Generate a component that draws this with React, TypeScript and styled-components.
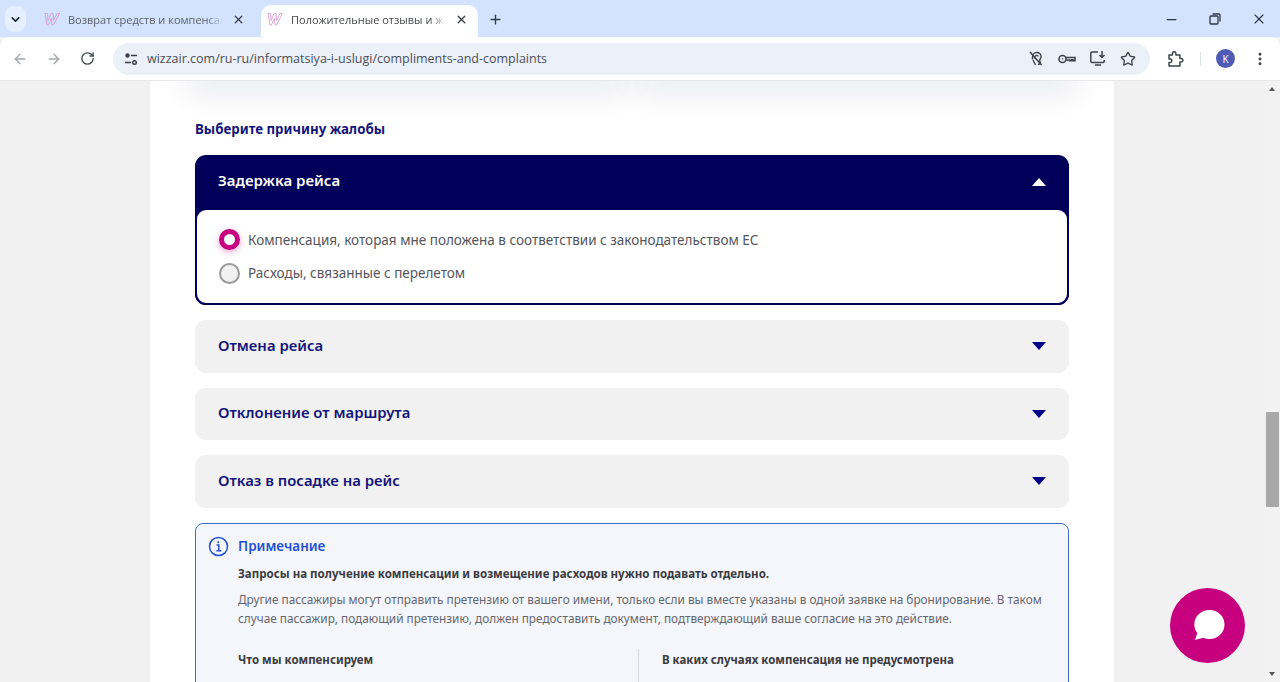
import React from "react";
import styled, { createGlobalStyle } from "styled-components";
import { ArrowLeft, ArrowRight, RotateCw, X, Plus, ChevronDown, Star, Minus, MoreVertical } from "lucide-react";

const Global = createGlobalStyle`
	html, body { margin: 0; padding: 0; height: 682px; overflow: hidden; background: #f1f1f1; }
	* { box-sizing: border-box; }
	body { font-family: "Noto Sans", "Liberation Sans", sans-serif; }
`;

const Window = styled.div`
	display: flex;
	flex-direction: column;
	width: 1280px;
	height: 682px;
	overflow: hidden;
`;

const TabStrip = styled.div`
	display: flex;
	align-items: flex-end;
	height: 37px;
	flex: none;
	background: #d3e3fd;
	padding-left: 5px;
`;

const TabSearch = styled.div`
	width: 21px;
	height: 26px;
	margin-bottom: 5px;
	border-radius: 9px;
	background: #e6effd;
	display: flex;
	align-items: center;
	justify-content: center;
	color: #1f2a3a;
`;

const Tab = styled.div<{ $active?: boolean }>`
	display: flex;
	align-items: center;
	width: ${(p) => (p.$active ? "217px" : "235px")};
	height: 32px;
	padding-left: ${(p) => (p.$active ? "6px" : "18px")};
	padding-bottom: 4px;
	background: ${(p) => (p.$active ? "#fff" : "transparent")};
	border-radius: 10px 10px 0 0;
	color: ${(p) => (p.$active ? "#45474a" : "#5a5f68")};
	font-family: "Open Sans", "Noto Sans", sans-serif;
	font-size: 11px;
`;

const TabLabel = styled.span`
	width: 155px;
	margin-left: 8px;
	overflow: hidden;
	white-space: nowrap;
	-webkit-mask-image: linear-gradient(90deg, #000 90%, transparent);
	mask-image: linear-gradient(90deg, #000 90%, transparent);
`;

const TabClose = styled.span`
	display: flex;
	margin-left: 9px;
	color: #3b3f46;
`;

const NewTab = styled.span`
	display: flex;
	margin: 0 0 10px 10px;
	color: #333a46;
`;

const WindowControls = styled.div`
	display: flex;
	align-items: center;
	gap: 28px;
	margin: 0 13px 10px auto;
	color: #2c3442;
`;

const RestoreIcon = () => (
	<svg width="16" height="16" viewBox="0 0 16 16" fill="none" stroke="currentColor" strokeWidth="1.3">
		<rect x="3" y="5" width="8" height="8" rx="1" />
		<path d="M5.5 3h6.500a1 1 0 0 1 1 1v6.500" />
	</svg>
);

const Toolbar = styled.div`
	display: flex;
	align-items: center;
	height: 44px;
	flex: none;
	background: #fff;
	border-radius: 10px 10px 0 0;
	border-bottom: 1px solid #e6e8ec;
	padding-left: 12px;
	color: #474c52;
`;

const NavButtons = styled.div`
	display: flex;
	align-items: center;
	gap: 18px;
`;

const Omnibox = styled.div`
	display: flex;
	align-items: center;
	width: 1037px;
	height: 32px;
	margin-left: 18px;
	padding: 0 14px 0 9px;
	border-radius: 16px;
	background: #ecf0f9;
`;

const SiteInfo = styled.span`
	display: flex;
	width: 18px;
	height: 18px;
	align-items: center;
	justify-content: center;
	color: #3a3f47;
`;

const Url = styled.span`
	margin-left: 7px;
	font-family: "Open Sans", "Noto Sans", sans-serif;
	font-size: 12.5px;
	color: #4a4f57;
`;

const OmniIcons = styled.div`
	display: flex;
	align-items: center;
	gap: 13px;
	margin-left: auto;
	color: #3e434a;
`;

const ToolRight = styled.div`
	display: flex;
	align-items: center;
	margin-left: 16px;
	color: #3e434a;
`;

const Separator = styled.span`
	width: 1px;
	height: 14px;
	margin: 0 15px 0 16px;
	background: #dfe3ea;
`;

const Avatar = styled.span`
	width: 19px;
	height: 19px;
	margin-right: 17px;
	border-radius: 50%;
	background: #4f5bb5;
	color: #fff;
	font-family: "Open Sans", sans-serif;
	font-size: 10px;
	display: flex;
	align-items: center;
	justify-content: center;
`;

const Viewport = styled.div`
	display: flex;
	flex: 1;
	min-height: 0;
`;

const PageArea = styled.div`
	flex: 1;
	display: flex;
	justify-content: flex-start;
	padding-left: 150px;
	background: #f1f1f1;
	overflow: hidden;
`;

const Sheet = styled.main`
	width: 964px;
	padding: 0 45px;
	background: #fff;
	overflow: hidden;
`;

const CardStubs = styled.div`
	display: flex;
	gap: 24px;
	height: 1px;
	margin-top: -1px;
`;

const CardStub = styled.div`
	flex: 1;
	height: 1px;
	box-shadow: 0 4px 26px 8px rgba(50, 55, 95, 0.13);
`;

const SectionTitle = styled.h2`
	margin: 39px 0 16px;
	font-size: 13.3px;
	line-height: 19px;
	font-weight: 700;
	color: #14147a;
`;

const Accordion = styled.div`
	display: flex;
	flex-direction: column;
	gap: 15px;
`;

const OpenItem = styled.section`
	border-radius: 11px;
	background: #00005a;
`;

const OpenHeader = styled.div`
	display: flex;
	align-items: center;
	justify-content: space-between;
	height: 53px;
	padding: 0 23px 3px;
	font-size: 15px;
	font-weight: 600;
	color: #fff;
`;

const OpenBody = styled.div`
	display: flex;
	flex-direction: column;
	gap: 11.5px;
	height: 97px;
	padding: 18.5px 22px 0;
	background: #fff;
	border: 2px solid #00005a;
	border-radius: 11px;
`;

const Option = styled.label`
	display: flex;
	align-items: center;
	gap: 8px;
	font-size: 13.5px;
	line-height: 22px;
	color: #55565c;
`;

const Radio = styled.span<{ $checked?: boolean }>`
	width: 21px;
	height: 21px;
	flex: none;
	border-radius: 50%;
	background: ${(p) => (p.$checked ? "#fff" : "#f1f1f1")};
	border: ${(p) => (p.$checked ? "5px solid #c6007e" : "2px solid #9a9a9c")};
	box-shadow: ${(p) => (p.$checked ? "0 2px 6px rgba(198, 0, 126, 0.35)" : "none")};
`;

const ClosedItem = styled.div`
	display: flex;
	align-items: center;
	justify-content: space-between;
	height: 52.5px;
	padding: 0 23px 3px;
	border-radius: 11px;
	background: #f1f1f1;
	font-size: 14.9px;
	font-weight: 600;
	color: #14147a;
`;

const Caret = styled.span<{ $up?: boolean; $color: string }>`
	width: 0;
	height: 0;
	margin-top: 3px;
	border-left: 7.5px solid transparent;
	border-right: 7.5px solid transparent;
	${(p) => (p.$up ? "border-bottom" : "border-top")}: 8px solid ${(p) => p.$color};
`;

const Note = styled.aside`
	margin-top: 15px;
	height: 260px;
	padding: 12px 20px 0 42px;
	border: 1px solid #3d6fc9;
	border-radius: 8px;
	background: #f4f6fc;
`;

const NoteHead = styled.div`
	display: flex;
	align-items: center;
	gap: 9px;
	margin-left: -30px;
	font-size: 13.5px;
	line-height: 19px;
	font-weight: 600;
	color: #2350d2;
`;

const NoteLead = styled.p`
	margin: 9px 0 0;
	font-size: 11.55px;
	line-height: 16px;
	font-weight: 700;
	color: #3b3b40;
`;

const NoteText = styled.p`
	margin: 8px 0 0;
	font-size: 11.8px;
	line-height: 19px;
	color: #66676c;
`;

const NoteColumns = styled.div`
	display: grid;
	grid-template-columns: 400px 1fr;
	margin-top: 21px;
`;

const NoteColumn = styled.div<{ $divided?: boolean }>`
	height: 60px;
	font-size: 11.5px;
	line-height: 16px;
	font-weight: 700;
	color: #3b3b40;
	padding-top: 3px;
	${(p) => p.$divided && "border-left: 1px solid #d9dbe2; padding-left: 23px;"}
`;

const ScrollTrack = styled.div`
	position: relative;
	width: 15px;
	flex: none;
	background: #f2f2f2;
`;

const ScrollThumb = styled.div`
	position: absolute;
	top: 331px;
	left: 1px;
	width: 13px;
	height: 95px;
	background: #a8a8a8;
`;

const ScrollArrow = styled.span<{ $up?: boolean }>`
	position: absolute;
	left: 4px;
	${(p) => (p.$up ? "top: 6px" : "bottom: 6px")};
	border-left: 3.5px solid transparent;
	border-right: 3.5px solid transparent;
	${(p) => (p.$up ? "border-bottom" : "border-top")}: 4px solid #555;
`;

const ChatButton = styled.button`
	position: fixed;
	left: 1170px;
	top: 588px;
	width: 75px;
	height: 75px;
	padding: 0 0 2px;
	border: 0;
	border-radius: 50%;
	background: #c6007e;
	display: flex;
	align-items: center;
	justify-content: center;
`;

const WizzLogo = ({ faded }: { faded?: boolean }) => (
	<svg width="16" height="14" viewBox="0 0 16 14" fill="none" stroke={faded ? "#e0a6dc" : "#d9a0d8"} strokeWidth="1">
		<path d="M1 1.500h2.500l.5 7 3-7h2l.5 7 3.500-7H15.500l-6 11.500H8l-.5-7-3 7H3z" />
	</svg>
);

const SiteInfoIcon = () => (
	<svg width="14" height="14" viewBox="0 0 14 14" fill="none" stroke="currentColor" strokeWidth="1.4">
		<circle cx="3.500" cy="3.500" r="1.500" fill="currentColor" />
		<path d="M7 3.500h6M1 10.500h6" />
		<circle cx="10.500" cy="10.500" r="1.800" />
	</svg>
);

const PinOffIcon = () => (
	<svg width="17" height="17" viewBox="0 0 17 17" fill="none" stroke="currentColor" strokeWidth="1.4">
		<path d="M4.500 9.500V7a4.300 4.300 0 0 1 8.600-.5c.2 1.600-1 2.200-1.400 3.300-.3 1 .4 2.300.8 3.200-.5 1-1.500 1.500-2.500 1" />
		<path d="M7 8.500a2 2 0 0 1 3.500-2" />
		<path d="M2 2l11.500 13" strokeWidth="1.600" />
		<path d="M5 10l2.500 5" />
	</svg>
);

const KeyIcon = () => (
	<svg width="18" height="12" viewBox="0 0 18 12" fill="none" stroke="currentColor" strokeWidth="1.6">
		<circle cx="4.500" cy="6" r="3.500" />
		<circle cx="4.500" cy="6" r=".8" fill="currentColor" stroke="none" />
		<path d="M8 4.500h9v3.300h-2v-1h-1.500v1h-2V7H8" />
	</svg>
);

const InstallIcon = () => (
	<svg width="18" height="17" viewBox="0 0 18 17" fill="none" stroke="currentColor" strokeWidth="1.5">
		<path d="M9 2H3a1.200 1.200 0 0 0-1.200 1.200v8A1.200 1.200 0 0 0 3 12.400h11a1.200 1.200 0 0 0 1.200-1.200V10" />
		<path d="M6 15h6" />
		<path d="M13 1v6M10.500 5l2.500 2.500L15.500 5" />
	</svg>
);

const PuzzleIcon = () => (
	<svg width="18" height="18" viewBox="0 0 18 18" fill="none" stroke="currentColor" strokeWidth="1.5" strokeLinejoin="round">
		<path d="M3 5h3.500V3.500a1.700 1.700 0 0 1 3.400 0V5h4v3.500h1.300a1.700 1.700 0 0 1 0 3.400h-1.300V16H3v-3.500h1.200a1.700 1.700 0 0 0 0-3.400H3z" />
	</svg>
);

const InfoIcon = () => (
	<svg width="21" height="21" viewBox="0 0 21 21" fill="none" stroke="#2350d2">
		<circle cx="10.500" cy="10.500" r="9" strokeWidth="1.500" />
		<path d="M8.500 9h2.300v5.500M8.300 14.800h5" strokeWidth="1.500" />
		<circle cx="10.300" cy="6.300" r="1" fill="#2350d2" stroke="none" />
	</svg>
);

const ChatIcon = () => (
	<svg width="36" height="36" viewBox="0 0 36 36" style={{ marginLeft: 3 }}>
		<path
			fill="#fff"
			d="M18.500 3C27 3 33.500 9.300 33.500 17.500S27 32 18.500 32c-2.200 0-4.300-.5-6.200-1.300L4 33l2.300-7c-2-2.400-3-5.300-3-8.500C3.300 9.300 10 3 18.500 3z"
		/>
	</svg>
);

const closedReasons = ["Отмена рейса", "Отклонение от маршрута", "Отказ в посадке на рейс"];

export default function App() {
	return (
		<Window>
			<Global />
			<TabStrip>
				<TabSearch><ChevronDown size={13} strokeWidth={3} /></TabSearch>
				<Tab>
					<WizzLogo />
					<TabLabel>Возврат средств и компенсация</TabLabel>
					<TabClose><X size={13} strokeWidth={2.4} /></TabClose>
				</Tab>
				<Tab $active>
					<WizzLogo faded />
					<TabLabel>Положительные отзывы и жалобы</TabLabel>
					<TabClose><X size={13} strokeWidth={2.6} /></TabClose>
				</Tab>
				<NewTab><Plus size={15} strokeWidth={2.2} /></NewTab>
				<WindowControls>
					<Minus size={15} />
					<RestoreIcon />
					<X size={16} strokeWidth={1.6} />
				</WindowControls>
			</TabStrip>
			<Toolbar>
				<NavButtons>
					<ArrowLeft size={16} color="#a3a6ab" />
					<ArrowRight size={16} color="#a3a6ab" />
					<RotateCw size={15} color="#474c52" strokeWidth={2.2} />
				</NavButtons>
				<Omnibox>
					<SiteInfo><SiteInfoIcon /></SiteInfo>
					<Url>wizzair.com/ru-ru/informatsiya-i-uslugi/compliments-and-complaints</Url>
					<OmniIcons>
						<PinOffIcon />
						<KeyIcon />
						<InstallIcon />
						<Star size={16} strokeWidth={2} />
					</OmniIcons>
				</Omnibox>
				<ToolRight>
					<PuzzleIcon />
					<Separator />
					<Avatar>K</Avatar>
					<MoreVertical size={16} strokeWidth={2.4} />
				</ToolRight>
			</Toolbar>
			<Viewport>
				<PageArea>
					<Sheet>
						<CardStubs>
							<CardStub />
							<CardStub />
						</CardStubs>
						<SectionTitle>Выберите причину жалобы</SectionTitle>
						<Accordion>
							<OpenItem>
								<OpenHeader>
									Задержка рейса
									<Caret $up $color="#fff" />
								</OpenHeader>
								<OpenBody>
									<Option><Radio $checked />Компенсация, которая мне положена в соответствии с законодательством ЕС</Option>
									<Option><Radio />Расходы, связанные с перелетом</Option>
								</OpenBody>
							</OpenItem>
							{closedReasons.map((reason) => (
								<ClosedItem key={reason}>
									{reason}
									<Caret $color="#00008a" />
								</ClosedItem>
							))}
						</Accordion>
						<Note>
							<NoteHead><InfoIcon />Примечание</NoteHead>
							<NoteLead>Запросы на получение компенсации и возмещение расходов нужно подавать отдельно.</NoteLead>
							<NoteText>
								Другие пассажиры могут отправить претензию от вашего имени, только если вы вместе указаны в одной заявке на бронирование. В таком случае пассажир, подающий претензию, должен предоставить документ, подтверждающий ваше согласие на это действие.
							</NoteText>
							<NoteColumns>
								<NoteColumn>Что мы компенсируем</NoteColumn>
								<NoteColumn $divided>В каких случаях компенсация не предусмотрена</NoteColumn>
							</NoteColumns>
						</Note>
					</Sheet>
				</PageArea>
				<ScrollTrack>
					<ScrollArrow $up />
					<ScrollThumb />
					<ScrollArrow />
				</ScrollTrack>
			</Viewport>
			<ChatButton aria-label="chat"><ChatIcon /></ChatButton>
		</Window>
	);
}
